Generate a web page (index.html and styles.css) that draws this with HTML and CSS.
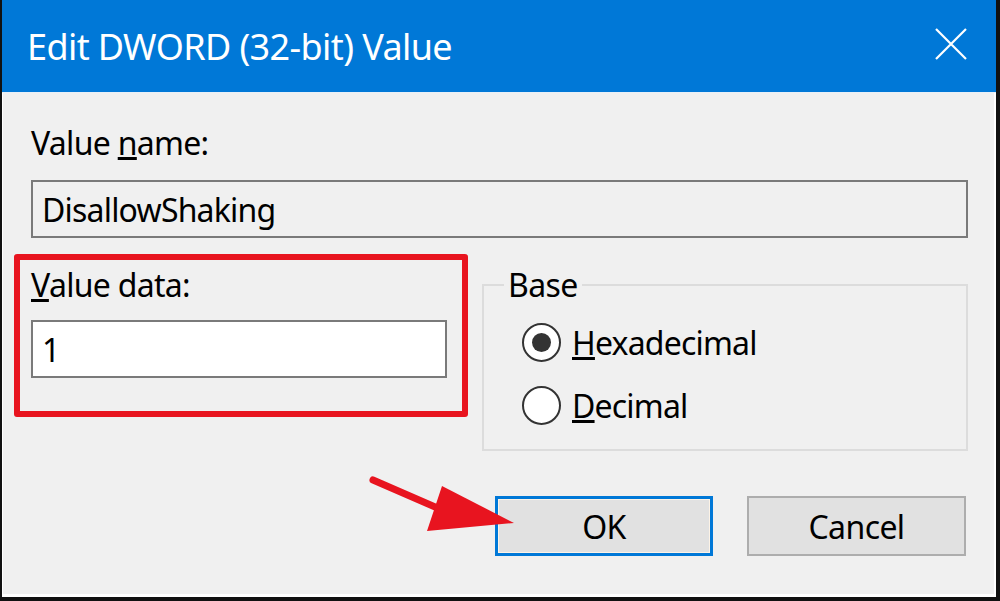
FILE: index.html
```html
<!DOCTYPE html>
<html lang="en">
<head>
  <meta charset="UTF-8">
  <meta name="viewport" content="width=device-width, initial-scale=1.0">
  <title>Edit DWORD (32-bit) Value</title>
  <link rel="stylesheet" href="styles.css">
</head>
<body>

  <div class="window">
    <div class="titlebar">
      <span class="title">Edit DWORD (32-bit) Value</span>
      <svg class="close" width="34" height="34" viewBox="0 0 34 34">
        <path d="M2 2 L32 32 M32 2 L2 32" stroke="#fff" stroke-width="2.2" fill="none"/>
      </svg>
    </div>

    <div class="content">
      <label class="field-label">Value <u>n</u>ame:</label>
      <div class="textbox readonly">DisallowShaking</div>

      <div class="data-row">
        <div class="value-data">
          <label class="field-label"><u>V</u>alue data:</label>
          <div class="textbox">1</div>
        </div>

        <fieldset class="base-group">
          <legend>Base</legend>
          <div class="radio-list">
            <div class="radio-row">
              <span class="radio checked"></span>
              <span class="radio-label"><u>H</u>exadecimal</span>
            </div>
            <div class="radio-row">
              <span class="radio"></span>
              <span class="radio-label"><u>D</u>ecimal</span>
            </div>
          </div>
        </fieldset>
      </div>

      <div class="buttons">
        <div class="button default">OK</div>
        <div class="button">Cancel</div>
      </div>
    </div>

    <!-- annotation arrow pointing at OK -->
    <svg class="arrow" width="160" height="70" viewBox="0 0 160 70">
      <path d="M13 10 L82 40" stroke="#e8141f" stroke-width="7" stroke-linecap="round" fill="none"/>
      <polygon points="82,16 154,53 67,61" fill="#e8141f"/>
    </svg>
  </div>

</body>
</html>
```

FILE: styles.css
```css
body {
  margin: 0;
  background-color: #111;
  font-family: "Noto Sans", "Open Sans", sans-serif;
  color: #000;
  height: 601px;
  overflow: hidden;
}

.window {
  position: relative;
  margin: 0 4px 0 2px;
  height: 597px;
  display: flex;
  flex-direction: column;
  background-color: #f0f0f0;
}

.titlebar {
  height: 92px;
  background-color: #0078d7;
  border-bottom: 1px solid #e8f0f8;
  display: flex;
  align-items: center;
  justify-content: space-between;
  padding: 0 28px 0 25px;
  flex-shrink: 0;
}

.title {
  color: #fff;
  font-size: 36px;
  letter-spacing: -0.6px;
  margin-top: 1px;
}

.close {
  display: block;
  margin-top: -4px;
}

.content {
  flex: 1;
  padding: 30px 28px 0 29px;
  box-shadow: inset 1px 0 0 #fff, inset -2px 0 0 #fff, inset 0 -3px 0 #fff;
}

.field-label {
  display: block;
  font-size: 32px;
  line-height: 40px;
  letter-spacing: -0.7px;
}

.textbox {
  height: 54px;
  margin-top: 17px;
  border: 2px solid #7a7a7a;
  background-color: #fff;
  font-size: 32px;
  letter-spacing: -0.8px;
  padding-left: 9px;
  display: flex;
  align-items: center;
}

.textbox.readonly {
  background-color: #f0f0f0;
}

.data-row {
  display: flex;
  align-items: flex-start;
  gap: 16px;
  margin-top: 16px;
}

/* red highlight round the value field */
.value-data {
  width: 416px;
  margin-left: -17px;
  border: 6px solid #e8141f;
  border-radius: 3px;
  padding: 5px 15px 33px 11px;
}

.value-data .textbox {
  margin-top: 15px;
}

.base-group {
  flex: 1;
  margin: 11px 0 0 -2px;
  border: 2px solid #dcdcdc;
  padding: 6px 0 12px 20px;
}

.base-group legend {
  font-size: 32px;
  line-height: 40px;
  letter-spacing: -0.6px;
  padding: 0 4px;
}

.radio-list {
  padding-left: 18px;
}

.radio-row {
  display: flex;
  align-items: center;
  height: 63px;
  gap: 11px;
}

.radio {
  width: 35px;
  height: 35px;
  border: 2.5px solid #333;
  border-radius: 50%;
  background-color: #fff;
  display: flex;
  align-items: center;
  justify-content: center;
}

.radio.checked::after {
  content: "";
  width: 19px;
  height: 19px;
  border-radius: 50%;
  background-color: #333;
}

.radio-label {
  font-size: 32px;
  letter-spacing: -0.8px;
}

.buttons {
  display: flex;
  justify-content: flex-end;
  gap: 34px;
  margin-top: 45px;
  margin-right: 2px;
}

.button {
  width: 215px;
  height: 56px;
  border: 2px solid #adadad;
  background-color: #e1e1e1;
  font-size: 32px;
  letter-spacing: -0.6px;
  display: flex;
  align-items: center;
  justify-content: center;
}

.button.default {
  width: 212px;
  height: 54px;
  border: 3px solid #0078d7;
  box-shadow: inset 0 0 0 1px #fdf3e6;
}

.arrow {
  position: absolute;
  left: 358px;
  top: 470px;
}
```
